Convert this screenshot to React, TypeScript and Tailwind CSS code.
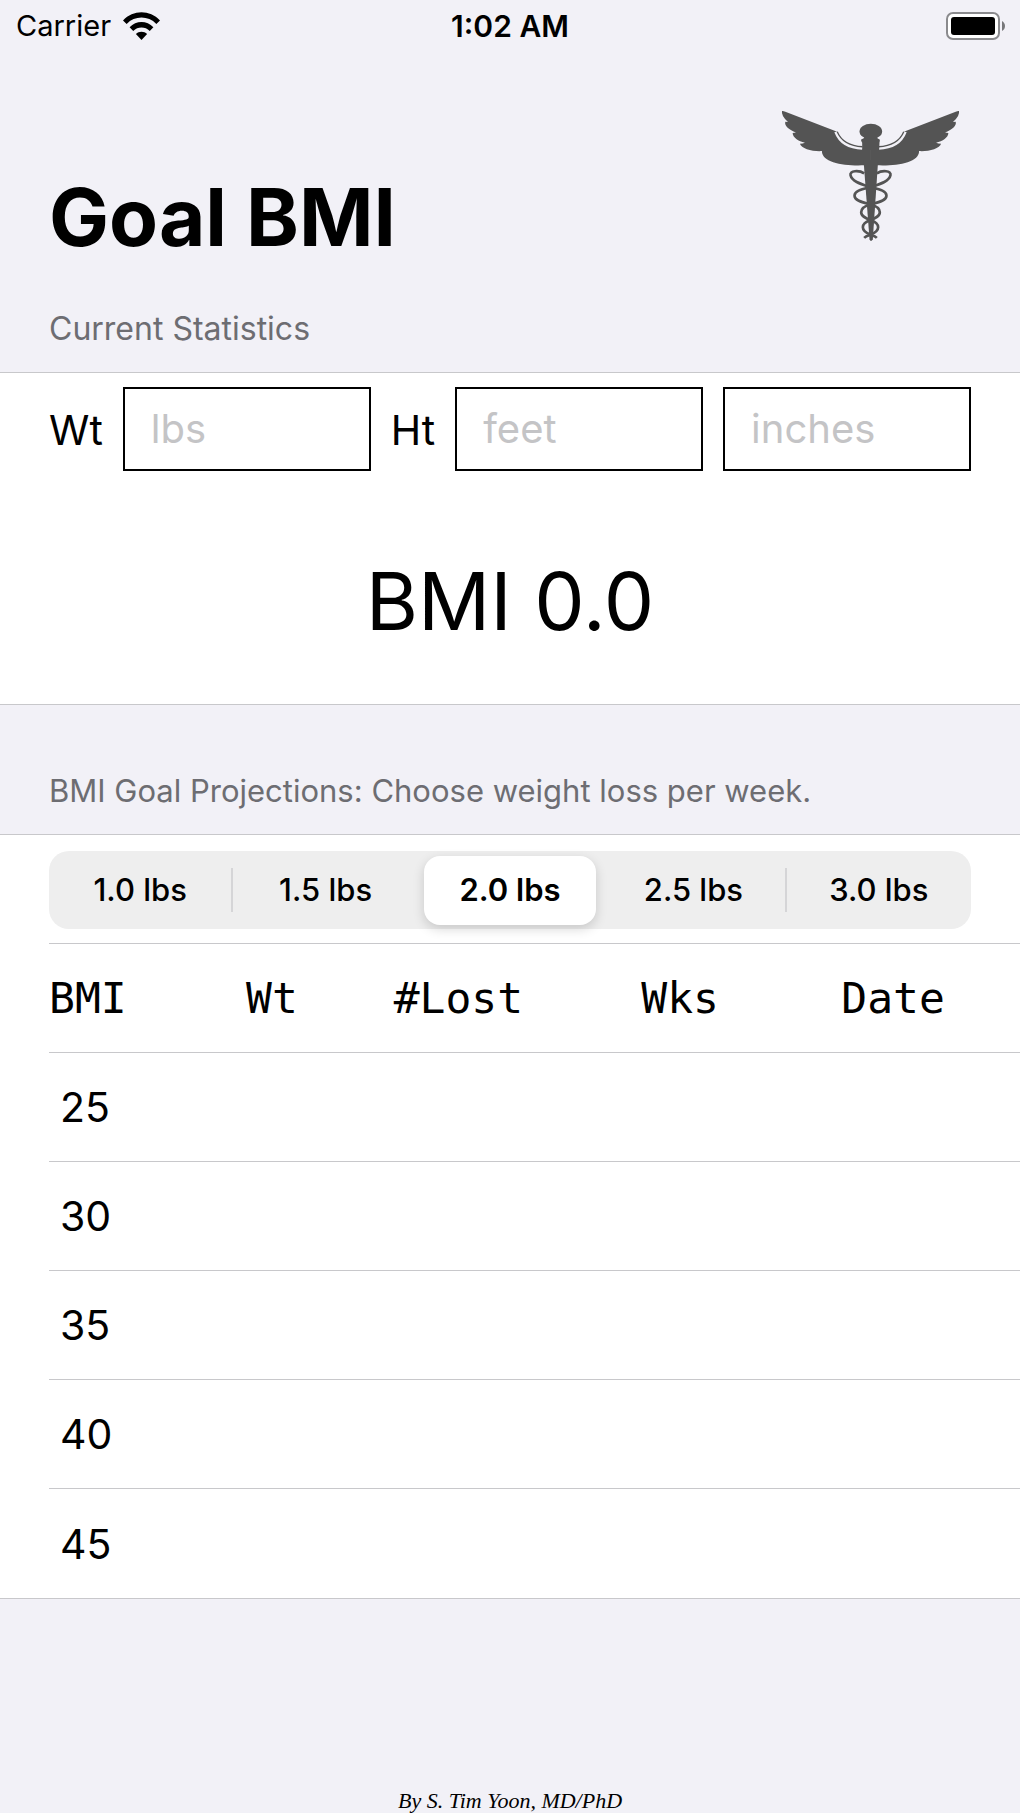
import { useState } from "react";

const rates = ["1.0 lbs", "1.5 lbs", "2.0 lbs", "2.5 lbs", "3.0 lbs"];
const goals = [25, 30, 35, 40, 45];

function WifiIcon() {
  return (
    <svg viewBox="0 0 112 84" className="h-7 w-[37px]" aria-label="Wi-Fi">
      <path d="M0 25C31-8 81-8 112 25L101 36C76 10 36 10 11 36Z" />
      <path d="M20 46C40 25 72 25 92 46L81 57C67 43 45 43 31 57Z" />
      <path d="M39 66C48 57 64 57 73 66L56 84Z" />
    </svg>
  );
}

function BatteryIcon() {
  return (
    <svg viewBox="0 0 60 28" className="h-7 w-[60px]" aria-label="Battery full">
      <rect x="1" y="1" width="52" height="26" rx="6" fill="#fff" stroke="#8a8a8d" strokeWidth="2" />
      <rect x="5" y="5" width="44" height="18" rx="3" />
      <path d="M56 9C60 11 60 17 56 19Z" fill="#77777a" />
    </svg>
  );
}

function Wing() {
  return (
    <>
      <path d="M36 33Q38 31 46 35L202 95Q213 135 277 147L303 147V190L284 196C225 199 155 188 156 153C130 155 93 146 90 131Q98 131 105 128C85 124 68 112 68 99L78 97C58 90 42 77 46 65L54 66Q33 47 36 33Z" />
      <path d="M198 95C209 124 236 143 278 144" fill="none" stroke="#f2f1f7" strokeWidth="10" />
      <path d="M202 95C213 121 238 138 278 140" fill="none" stroke="#545454" strokeWidth="4" />
      <path
        d="M283 220C268 210 238 211 242 226C246 246 280 254 303 262C328 268 350 272 350 287C350 302 325 307 303 313C288 317 274 322 274 337C274 350 290 356 303 361C317 366 325 371 325 382C325 394 312 400 303 404C295 407 288 409 283 414"
        fill="none"
        stroke="#545454"
        strokeWidth="8"
      />
    </>
  );
}

function Caduceus() {
  return (
    <svg viewBox="30 30 544 396" className="h-[132px] w-[181px] shrink-0" fill="#545454" aria-label="Caduceus">
      <Wing />
      <g transform="translate(604 0) scale(-1 1)">
        <Wing />
      </g>
      <ellipse cx="303" cy="94" rx="34" ry="23" />
      <path d="M284 110H322L324 116Q333 116 329 127L328 150H277V128Q269 117 280 116Z" />
      <path d="M281 180H325L309 418Q303 428 299 418Z" />
    </svg>
  );
}

function Field({ id, hint, label }: { id: string; hint: string; label?: string }) {
  return (
    <input
      id={id}
      aria-label={label}
      placeholder={hint}
      inputMode="decimal"
      className="h-[84px] w-0 min-w-0 flex-1 border-[2px] border-black bg-white px-[26px] pb-[2px] text-[40px] outline-none placeholder:text-[#c4c4c6]"
    />
  );
}

export default function App() {
  const [rate, setRate] = useState("2.0 lbs");
  return (
    <main className="flex min-h-screen flex-col bg-[#f2f1f7] font-['Inter',sans-serif] text-black">
      <div className="grid h-[52px] grid-cols-3 items-center px-[14px]">
        <div className="flex items-center gap-3 pl-[2px] text-[29px]">
          <span>Carrier</span>
          <WifiIcon />
        </div>
        <div className="text-center text-[30px] font-semibold">1:02 AM</div>
        <div className="flex justify-end">
          <BatteryIcon />
        </div>
      </div>

      <header className="flex items-start justify-between pt-[58px] pr-[59px] pl-[49px]">
        <h1 className="pt-[58px] text-[80px] leading-[98px] font-bold">Goal BMI</h1>
        <Caduceus />
      </header>

      <h2 className="px-[49px] pt-[42px] pb-[22px] text-[32px] leading-[42px] text-[#6d6d72]">Current Statistics</h2>
      <section className="border-y border-[#c8c8cb] bg-white">
        <div className="flex items-center gap-5 px-[49px] pt-[14px] text-[41px]">
          <label htmlFor="weight" className="pt-1">
            Wt
          </label>
          <Field id="weight" hint="lbs" />
          <label htmlFor="feet" className="pt-1">
            Ht
          </label>
          <Field id="feet" hint="feet" />
          <Field id="inches" hint="inches" label="Height, inches" />
        </div>
        <p className="pt-[80px] pb-[53px] text-center text-[80px] leading-[100px]">BMI 0.0</p>
      </section>

      <h2 className="px-[49px] pt-[65px] pb-[22px] text-[31px] leading-[42px] text-[#6d6d72]">
        BMI Goal Projections: Choose weight loss per week.
      </h2>
      <section className="border-y border-[#c8c8cb] bg-white">
        <div className="px-[49px] pt-4 pb-[14px]">
          <div className="flex h-[78px] items-center rounded-[20px] bg-[#eeeeee]">
            {rates.map((r, i) => (
              <div
                key={r}
                className={
                  i === 0 || i === 3
                    ? "flex flex-1 items-center after:h-11 after:w-[2px] after:bg-[#d5d5d7]"
                    : "flex flex-1 items-center"
                }
              >
                <button
                  type="button"
                  aria-pressed={r === rate}
                  onClick={() => setRate(r)}
                  className={
                    r === rate
                      ? "mx-[6px] h-[69px] flex-1 rounded-2xl bg-white text-[31px] font-semibold shadow-[0_4px_12px_rgba(0,0,0,0.16)]"
                      : "h-[69px] flex-1 rounded-2xl text-[31px] font-medium"
                  }
                >
                  {r}
                </button>
              </div>
            ))}
          </div>
        </div>
        <div className="pl-[49px]">
          <table className="w-full table-fixed text-left text-[41px]">
            <thead>
              <tr className="h-[109px] border-t border-[#c8c8cb] font-['DejaVu_Sans_Mono',monospace] text-[43px]">
                <th className="w-[20.3%] font-normal">BMI</th>
                <th className="w-[15.2%] font-normal">Wt</th>
                <th className="w-[25.5%] font-normal">#Lost</th>
                <th className="w-[20.6%] font-normal">Wks</th>
                <th className="font-normal">Date</th>
              </tr>
            </thead>
            <tbody>
              {goals.map((g) => (
                <tr key={g} className="h-[109px] border-t border-[#c8c8cb]">
                  <td className="pt-[2px] pl-[11px]">{g}</td>
                  <td />
                  <td />
                  <td />
                  <td />
                </tr>
              ))}
            </tbody>
          </table>
        </div>
      </section>

      <footer className="mt-auto text-center font-['Liberation_Serif',serif] text-[22px] leading-6 italic">
        By S. Tim Yoon, MD/PhD
      </footer>
    </main>
  );
}
